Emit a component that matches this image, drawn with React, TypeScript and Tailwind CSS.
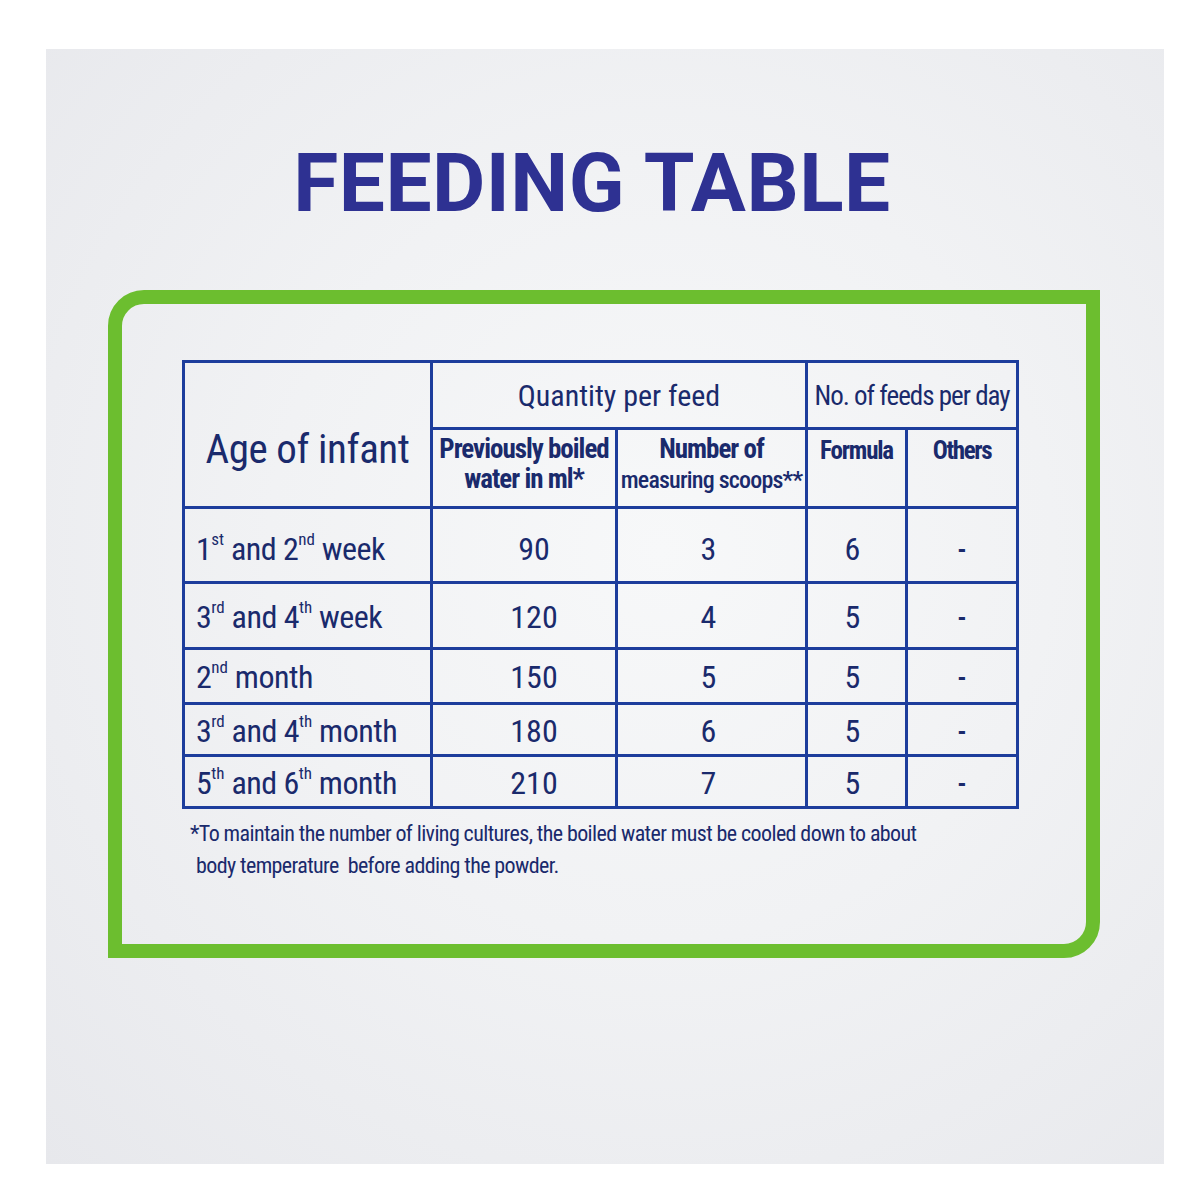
const rows = [
  { a: "1", as: "st", b: "2", bs: "nd", unit: "week", water: "90", scoops: "3", formula: "6" },
  { a: "3", as: "rd", b: "4", bs: "th", unit: "week", water: "120", scoops: "4", formula: "5" },
  { a: "2", as: "nd", b: "", bs: "", unit: "month", water: "150", scoops: "5", formula: "5" },
  { a: "3", as: "rd", b: "4", bs: "th", unit: "month", water: "180", scoops: "6", formula: "5" },
  { a: "5", as: "th", b: "6", bs: "th", unit: "month", water: "210", scoops: "7", formula: "5" },
];

function Sup({ children }: { children: React.ReactNode }) {
  return <span className="inline-block align-top relative top-[-2px] text-[17px] leading-none tracking-[0px]">{children}</span>;
}

export default function App() {
  const cell = "border-r-[3px] border-b-[3px] border-[#1d3d9c]";
  return (
    <div className="w-[1200px] h-[1200px] bg-white pt-[49px] pl-[46px]">
      <div className="w-[1118px] h-[1115px] flex flex-col bg-[radial-gradient(ellipse_at_55%_45%,#f7f8f9_0%,#f1f2f4_45%,#e7e8ec_100%)] [font-family:'Roboto_Condensed','Liberation_Sans',sans-serif] text-[#1a2a6c]">
        <div className="mt-[93px] h-[82px] flex justify-center pr-[26px]">
          <h1 className="[font-family:Roboto,'Liberation_Sans',sans-serif] font-bold text-[82px] leading-[82px] text-[#2e3192] tracking-[0.5px] whitespace-nowrap">
            FEEDING TABLE
          </h1>
        </div>

        <div className="ml-[62px] mt-[66px] w-[992px] h-[668px] border-[14px] border-[#6cbe2f] rounded-tl-[36px] rounded-br-[36px] flex flex-col">
          <div className="ml-[60px] mt-[56px] w-[837px] grid grid-cols-[248px_185px_190px_100px_111px] grid-rows-[67px_79px_75px_66px_55px_52px_52px] border-t-[3px] border-l-[3px] border-[#1d3d9c]">
            <div className={`${cell} row-span-2 flex items-center justify-center pt-[30px] text-[41px] leading-none tracking-[-0.4px] whitespace-nowrap`}>
              Age of infant
            </div>
            <div className={`${cell} col-span-2 flex items-center justify-center text-[30px] leading-none pt-[2px] whitespace-nowrap`}>
              Quantity per feed
            </div>
            <div className={`${cell} col-span-2 flex items-center justify-center text-[27px] leading-none tracking-[-1px] pt-[2px] whitespace-nowrap`}>
              No. of feeds per day
            </div>
            <div className={`${cell} flex flex-col items-center pt-[4px] text-[27px] leading-[30px] font-bold tracking-[-1px] whitespace-nowrap`}>
              <span>Previously boiled</span>
              <span>water in ml*</span>
            </div>
            <div className={`${cell} flex flex-col items-center pt-[4px] text-[24px] leading-[31px] tracking-[-0.8px] whitespace-nowrap`}>
              <span className="font-bold text-[27px] tracking-[-1px]">Number of</span>
              <span className="font-medium">measuring scoops**</span>
            </div>
            <div className={`${cell} flex justify-center pt-[6px] text-[25px] leading-[30px] font-bold tracking-[-1.2px]`}>Formula</div>
            <div className={`${cell} flex justify-center pt-[6px] text-[25px] leading-[30px] font-bold tracking-[-1.4px]`}>Others</div>

            {rows.map((r, i) => {
              const pt = i === 0 ? "pt-[8px]" : "pt-[2px]";
              return (
                <div key={i} className="contents">
                  <div className={`${cell} flex items-center pl-[11px] ${pt}`}>
                    <span className="text-[32px] leading-none tracking-[-0.5px] whitespace-nowrap">
                      {r.a}
                      <Sup>{r.as}</Sup>{" "}
                      {r.b ? (
                        <>
                          and {r.b}
                          <Sup>{r.bs}</Sup>{" "}
                        </>
                      ) : null}
                      {r.unit}
                    </span>
                  </div>
                  <div className={`${cell} flex items-center justify-center pl-[20px] text-[32px] leading-none ${pt}`}>
                    {r.water}
                  </div>
                  <div className={`${cell} flex items-center justify-center pr-[6px] text-[32px] leading-none ${pt}`}>
                    {r.scoops}
                  </div>
                  <div className={`${cell} flex items-center justify-center pr-[8px] text-[32px] leading-none ${pt}`}>
                    {r.formula}
                  </div>
                  <div className={`${cell} flex items-center justify-center text-[26px] font-bold leading-none ${pt}`}>
                    -
                  </div>
                </div>
              );
            })}
          </div>

          <div className="ml-[68px] mt-[9px] flex flex-col text-[22px] leading-[32px] tracking-[-0.6px] whitespace-nowrap">
            <span>*To maintain the number of living cultures, the boiled water must be cooled down to about</span>
            <span className="pl-[6px]">body temperature&nbsp; before adding the powder.</span>
          </div>
        </div>
      </div>
    </div>
  );
}
